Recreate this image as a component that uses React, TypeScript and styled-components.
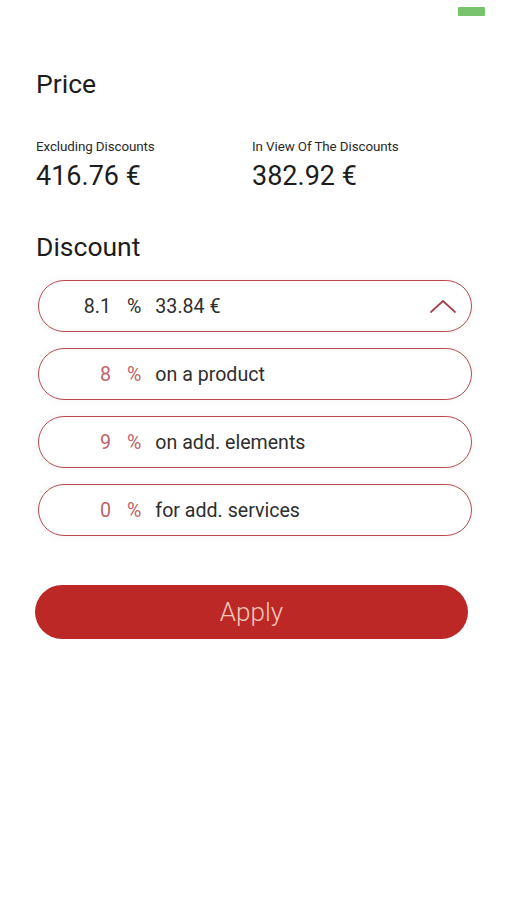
import React from "react";
import styled, { createGlobalStyle } from "styled-components";

const GlobalStyle = createGlobalStyle`
  html, body {
    margin: 0;
    padding: 0;
    background: #ffffff;
  }
  body {
    font-family: Roboto, "Liberation Sans", Arial, sans-serif;
    color: #222;
  }
`;

const Screen = styled.div`
  width: 507px;
  min-height: 900px;
  background: #fff;
  box-sizing: border-box;
`;

const StatusBar = styled.div`
  height: 24px;
  display: flex;
  justify-content: flex-end;
  align-items: flex-start;
  padding: 7px 22px 0 0;
  box-sizing: border-box;
`;

const Battery = styled.div`
  width: 27px;
  height: 9px;
  background: #78c46c;
  border-radius: 1px;
`;

const Content = styled.div`
  padding: 0 36px 0 36px;
`;

const Title = styled.h2<{ $top: number }>`
  margin: ${(p) => p.$top}px 0 0 0;
  font-size: 26.5px;
  font-weight: 400;
  line-height: 30px;
  color: #1d1d1d;
`;

const Totals = styled.div`
  display: grid;
  grid-template-columns: 216px 1fr;
  margin-top: 40px;
`;

const Total = styled.div`
  display: flex;
  flex-direction: column;
`;

const TotalLabel = styled.span`
  font-size: 13.4px;
  line-height: 16px;
  color: #2a2a2a;
  letter-spacing: -0.1px;
`;

const TotalValue = styled.span`
  margin-top: 6px;
  font-size: 27px;
  line-height: 30px;
  color: #1d1d1d;
`;

const DiscountList = styled.div`
  display: flex;
  flex-direction: column;
  gap: 16px;
  margin: 18px -1px 0 2px;
`;

const Pill = styled.div`
  height: 52px;
  box-sizing: border-box;
  border: 1.5px solid #b9494d;
  border-radius: 26px;
  display: flex;
  align-items: center;
  padding-right: 14px;
  box-shadow: 0 0 8px rgba(0, 0, 0, 0.05);
  font-size: 19.6px;
  color: #2e2e2e;
`;

const Value = styled.span<{ $accent: boolean }>`
  width: 72px;
  text-align: right;
  color: ${(p) => (p.$accent ? "#c0646b" : "#2e2e2e")};
`;

const Percent = styled.span<{ $accent: boolean }>`
  margin-left: 16px;
  color: ${(p) => (p.$accent ? "#c0646b" : "#2e2e2e")};
`;

const Label = styled.span`
  margin-left: 14px;
  flex: 1;
`;

const ApplyButton = styled.button`
  margin: 49px 0 0 -1px;
  width: 433px;
  height: 54px;
  border: none;
  border-radius: 27px;
  background: #bb2826;
  color: #f6c7bb;
  font-family: Roboto, "Liberation Sans", Arial, sans-serif;
  font-size: 26px;
  font-weight: 300;
  display: flex;
  align-items: center;
  justify-content: center;
`;

const ChevronUp = () => (
  <svg width="28" height="16" viewBox="0 0 28 16" fill="none">
    <polyline
      points="2,14 14,3 26,14"
      stroke="#a6434a"
      strokeWidth="1.7"
      strokeLinecap="round"
      strokeLinejoin="round"
    />
  </svg>
);

const discounts = [
  { value: "8", label: "on a product" },
  { value: "9", label: "on add. elements" },
  { value: "0", label: "for add. services" },
];

export default function App() {
  return (
    <Screen>
      <GlobalStyle />
      <StatusBar>
        <Battery />
      </StatusBar>
      <Content>
        <Title $top={45}>Price</Title>
        <Totals>
          <Total>
            <TotalLabel>Excluding Discounts</TotalLabel>
            <TotalValue>416.76 €</TotalValue>
          </Total>
          <Total>
            <TotalLabel>In View Of The Discounts</TotalLabel>
            <TotalValue>382.92 €</TotalValue>
          </Total>
        </Totals>
        <Title $top={41}>Discount</Title>
        <DiscountList>
          <Pill>
            <Value $accent={false}>8.1</Value>
            <Percent $accent={false}>%</Percent>
            <Label>33.84 €</Label>
            <ChevronUp />
          </Pill>
          {discounts.map((d) => (
            <Pill key={d.label}>
              <Value $accent>{d.value}</Value>
              <Percent $accent>%</Percent>
              <Label>{d.label}</Label>
            </Pill>
          ))}
        </DiscountList>
        <ApplyButton>Apply</ApplyButton>
      </Content>
    </Screen>
  );
}
